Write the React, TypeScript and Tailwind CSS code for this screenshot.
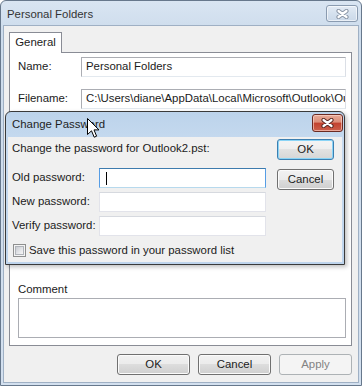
import React from 'react';

const FONT = "font-['Liberation_Sans',Arial,sans-serif] text-[11.4px] text-[#1b1b1b]";

const CloseGlyph = ({ outline }: { outline: string }) => (
  <svg width="13" height="10" viewBox="0 0 13 10">
    <path d="M2.5 2 L10.5 8 M10.5 2 L2.5 8" stroke={outline} strokeWidth="4.2" strokeLinecap="round" />
    <path d="M2.5 2 L10.5 8 M10.5 2 L2.5 8" stroke="#ffffff" strokeWidth="2.2" strokeLinecap="round" />
  </svg>
);

type BtnKind = 'normal' | 'default' | 'disabled';

const Button = ({ label, kind = 'normal', className = '' }: { label: string; kind?: BtnKind; className?: string }) => {
  let look =
    'border-[#707070] text-[#1b1b1b] bg-[linear-gradient(to_bottom,#f2f2f2_0%,#ebebeb_50%,#dddddd_50%,#cfcfcf_100%)] shadow-[inset_0_0_0_1px_#fbfbfb]';
  if (kind === 'default') {
    look =
      'border-[#3c7fb1] text-[#1b1b1b] bg-[linear-gradient(to_bottom,#f4f4f4_0%,#eeeeee_50%,#e2e2e2_50%,#d6d6d6_100%)] shadow-[inset_0_0_0_1px_#8ad4f6]';
  }
  if (kind === 'disabled') {
    look = 'border-[#adb2b5] text-[#838383] bg-[#f4f4f4]';
  }
  return (
    <div className={`flex items-center justify-center rounded-[3px] border ${look} ${className}`}>
      {label}
    </div>
  );
};

const TextBox = ({ value, className = '' }: { value?: string; className?: string }) => (
  <div
    className={`flex h-[20px] items-center overflow-hidden whitespace-nowrap border border-[#abadb3] border-r-[#dbdfe6] border-b-[#e3e9ef] bg-white pl-[4px] ${className}`}
  >
    {value}
  </div>
);

const PwRow = ({ label, focused }: { label: string; focused?: boolean }) => (
  <div className="flex h-[20px] items-center">
    <div className="w-[91px] whitespace-nowrap pl-[4px]">{label}</div>
    <div
      className={`flex h-[20px] w-[167px] items-center border bg-white ${
        focused
          ? 'border-[#569de5] border-t-[#3d7bad] border-b-[#b7d9ed]'
          : 'border-[#e2e3ea] border-t-[#d6d9df]'
      }`}
    >
      {focused && <div className="ml-[6px] h-[13px] w-px bg-black" />}
    </div>
  </div>
);

const Cursor = () => (
  <svg width="13" height="21" viewBox="0 0 13 21" className="absolute left-[87px] top-[118px]">
    <path
      d="M0.5 0.5 L0.5 16.5 L4.5 12.8 L7.2 19.2 L9.6 18.2 L7 11.9 L12 11.9 Z"
      fill="#ffffff"
      stroke="#000000"
      strokeWidth="1"
      strokeLinejoin="miter"
    />
  </svg>
);

const ChangePasswordDialog = () => (
  <div className="absolute left-[5px] top-[111px] flex h-[154px] w-[340px] flex-col rounded-t-[6px] border border-[#3a3a3a] bg-[linear-gradient(to_bottom,#bcd3eb_0%,#c6daef_20%,#bed4ec_100%)] shadow-[2px_2px_4px_rgba(0,0,0,0.25)]">
    <div className="flex h-[25px] items-start justify-between pl-[6px]">
      <div className="pt-[4px] text-[#1e1e1e]">Change Password</div>
      <div className="mr-[1px] mt-[2px] flex h-[18px] w-[31px] items-center justify-center rounded-[3px] border border-[#6b2a22] bg-[linear-gradient(to_bottom,#e8aa98_0%,#dc8d78_45%,#c2412e_50%,#cd604b_100%)] shadow-[inset_0_0_0_1px_rgba(255,220,210,0.6)]">
        <CloseGlyph outline="#5a2a24" />
      </div>
    </div>
    <div className="mx-[2px] mb-[2px] flex flex-1 bg-[#f0f0f0]">
      <div className="flex flex-1 flex-col">
        <div className="pl-[4px] pt-[4px] leading-[15px]">Change the password for Outlook2.pst:</div>
        <div className="mt-[12px] flex flex-col gap-[4px]">
          <PwRow label="Old password:" focused />
          <PwRow label="New password:" />
          <PwRow label="Verify password:" />
        </div>
        <div className="mt-[7px] flex items-center pl-[5px]">
          <div className="flex h-[13px] w-[13px] items-center justify-center border border-[#8e8f8f] bg-[#f4f4f4]">
            <div className="h-[9px] w-[9px] border border-[#b0b4ba] bg-[linear-gradient(135deg,#c9ccd2_0%,#e6e7ea_60%,#f6f6f6_100%)]" />
          </div>
          <div className="ml-[3px] leading-[15px]">Save this password in your password list</div>
        </div>
      </div>
      <div className="mr-[8px] flex w-[57px] flex-col gap-[9px] pt-[2px]">
        <Button label="OK" kind="default" className="h-[21px]" />
        <Button label="Cancel" className="h-[21px]" />
      </div>
    </div>
  </div>
);

export default function App() {
  return (
    <div className={`relative h-[386px] w-[362px] overflow-hidden bg-white ${FONT}`}>
      <div className="flex h-full flex-col rounded-t-[6px] border border-[#67788c] bg-[linear-gradient(to_bottom,#d9e5f2_0%,#cddcec_8%,#d3e0ef_100%)]">
        {/* title bar */}
        <div className="flex h-[24px] items-start justify-between pl-[6px]">
          <div className="pt-[5px] text-[#333333]">Personal Folders</div>
          <div className="mr-[3px] mt-[4px] flex h-[17px] w-[32px] items-center justify-center rounded-[3px] border border-[#8a9bb0] bg-[linear-gradient(to_bottom,#e3ebf5_0%,#d5e1ee_50%,#cbd9e9_100%)] shadow-[inset_0_0_0_1px_rgba(255,255,255,0.6)]">
            <CloseGlyph outline="#8a96a6" />
          </div>
        </div>
        {/* client area */}
        <div className="mx-[2px] mb-[2px] flex flex-1 flex-col border border-[#9fb0c4] bg-[#f0f0f0] pl-[5px] pr-[6px] pt-[6px]">
          <div className="flex">
            <div className="relative z-10 -mb-px flex h-[21px] w-[53px] items-center justify-center border border-b-0 border-[#898c95] bg-white">
              General
            </div>
          </div>
          <div className="flex h-[294px] flex-col border border-[#898c95] bg-white pb-[7px] pl-[8px] pr-[5px] pt-[4px]">
            <div className="flex items-center">
              <div className="w-[63px]">Name:</div>
              <TextBox value="Personal Folders" className="flex-1" />
            </div>
            <div className="mt-[12px] flex items-center">
              <div className="w-[63px]">Filename:</div>
              <TextBox value="C:\Users\diane\AppData\Local\Microsoft\Outlook\Outlook2.pst" className="flex-1" />
            </div>
            <div className="h-[173px]" />
            <div className="h-[15px] leading-[15px]">Comment</div>
            <div className="mt-[1px] h-[40px] border border-[#abadb3] bg-white" />
          </div>
          <div className="mt-[8px] flex justify-end gap-[8px]">
            <Button label="OK" className="h-[21px] w-[73px]" />
            <Button label="Cancel" className="h-[21px] w-[73px]" />
            <Button label="Apply" kind="disabled" className="h-[21px] w-[73px]" />
          </div>
        </div>
      </div>
      <ChangePasswordDialog />
      <Cursor />
    </div>
  );
}
